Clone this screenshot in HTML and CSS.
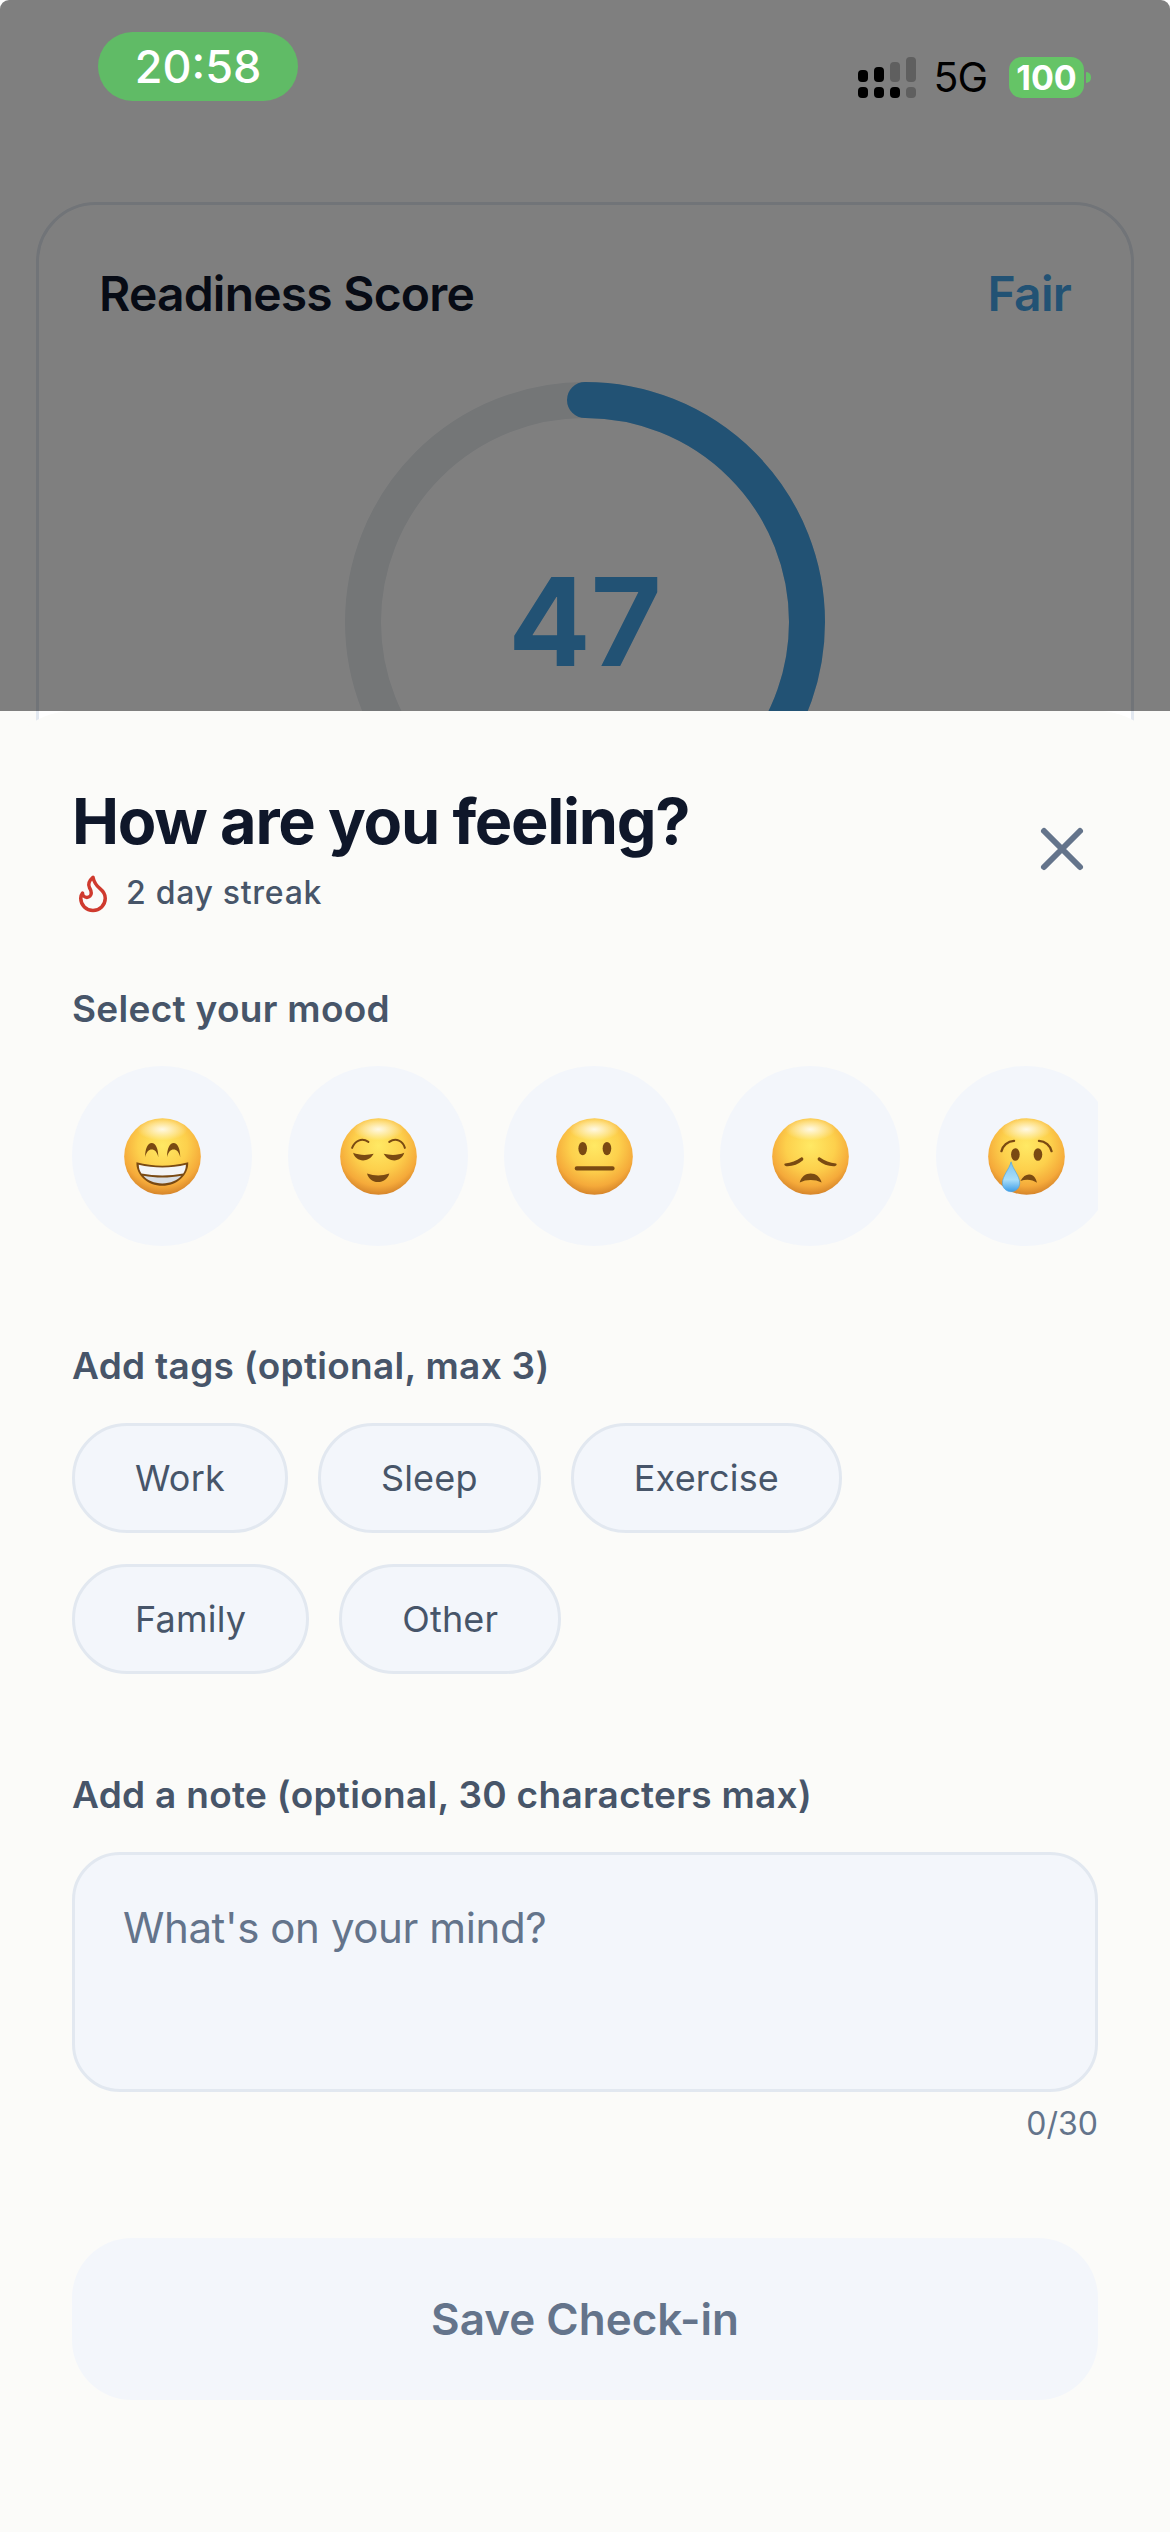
FILE: index.html
```html
<!DOCTYPE html>
<html lang="en">
<head>
<meta charset="utf-8">
<title>How are you feeling?</title>
<link rel="stylesheet" href="styles.css">
</head>
<body>
<svg class="defs" width="0" height="0" aria-hidden="true">
  <defs>
    <radialGradient id="face" cx="50%" cy="36%" r="64%">
      <stop offset="0" stop-color="#ffe964"/>
      <stop offset="0.5" stop-color="#fdd04c"/>
      <stop offset="0.82" stop-color="#f5aa3a"/>
      <stop offset="1" stop-color="#d6852a"/>
    </radialGradient>
    <radialGradient id="shine" cx="50%" cy="50%" r="50%">
      <stop offset="0" stop-color="#fff" stop-opacity="0.85"/>
      <stop offset="1" stop-color="#fff" stop-opacity="0"/>
    </radialGradient>
    <linearGradient id="drop" x1="0" y1="0" x2="0" y2="1">
      <stop offset="0" stop-color="#7cc3f2"/>
      <stop offset="0.6" stop-color="#a9def9"/>
      <stop offset="1" stop-color="#3c9ce6"/>
    </linearGradient>
  </defs>
</svg>

<div class="screen">
  <main class="backdrop">
    <section class="card">
      <div class="card-head">
        <h2 class="card-title">Readiness Score</h2>
        <span class="card-state">Fair</span>
      </div>
      <div class="ring">
        <svg class="ring-svg" width="480" height="480" viewBox="0 0 480 480">
          <circle cx="240" cy="240" r="222" fill="none" stroke="#e8ecef" stroke-width="36"/>
          <circle cx="240" cy="240" r="222" fill="none" stroke="#44a4e8" stroke-width="36" stroke-linecap="round" stroke-dasharray="655.6 1394.9" transform="rotate(-90 240 240)"/>
        </svg>
        <span class="ring-value">47</span>
      </div>
    </section>
  </main>

  <div class="scrim"></div>

  <header class="status">
    <span class="status-time">20:58</span>
    <div class="status-right">
      <svg class="signal" width="58" height="41" viewBox="0 0 58 41">
        <rect x="0" y="13" width="10" height="12" rx="4" fill="#000"/>
        <rect x="16" y="10" width="10" height="15" rx="4" fill="#000"/>
        <rect x="32" y="5" width="10" height="20" rx="4" fill="#5f5f5f"/>
        <rect x="48" y="0" width="10" height="25" rx="4" fill="#5f5f5f"/>
        <rect x="0" y="30" width="10" height="11" rx="4" fill="#000"/>
        <rect x="16" y="30" width="10" height="11" rx="4" fill="#000"/>
        <rect x="32" y="30" width="10" height="11" rx="4" fill="#000"/>
        <rect x="48" y="30" width="10" height="11" rx="4" fill="#5f5f5f"/>
      </svg>
      <span class="net">5G</span>
      <div class="battery"><span class="battery-level">100</span><span class="battery-nub"></span></div>
    </div>
  </header>

  <section class="sheet">
    <div class="sheet-head">
      <div>
        <h1 class="sheet-title">How are you feeling?</h1>
        <div class="streak">
          <svg width="42" height="42" viewBox="0 0 24 24" fill="none" stroke="#cf3a2e" stroke-width="2" stroke-linecap="round" stroke-linejoin="round"><path d="M8.5 14.5A2.5 2.5 0 0 0 11 12c0-1.38-.5-2-1-3-1.072-2.143-.224-4.054 2-6 .5 2.5 2 4.9 4 6.5 2 1.6 3 3.5 3 5.5a7 7 0 1 1-14 0c0-1.153.433-2.294 1-3a2.5 2.5 0 0 0 2.5 2.5z"/></svg>
          <span>2 day streak</span>
        </div>
      </div>
      <svg class="close" width="72" height="72" viewBox="0 0 24 24" fill="none" stroke="#64748b" stroke-width="2" stroke-linecap="round" stroke-linejoin="round"><path d="M18 6 6 18M6 6l12 12"/></svg>
    </div>

    <h3 class="label label-mood">Select your mood</h3>
    <div class="moods">
      <div class="mood">
        <svg class="emoji" viewBox="0 0 231 232">
          <circle cx="115.5" cy="116" r="115.5" fill="url(#face)"/>
          <ellipse cx="115" cy="34" rx="76" ry="34" fill="url(#shine)"/>
          <path d="M63 118c0-26 8-43 20-43s20 17 20 43c-4-16-11-23-20-23s-16 7-20 23z" fill="#7a4a12"/>
          <path d="M129 118c0-26 8-43 20-43s20 17 20 43c-4-16-11-23-20-23s-16 7-20 23z" fill="#7a4a12"/>
          <path d="M37 133c52 14 104 14 156 0 2 38-34 71-78 71s-80-33-78-71z" fill="#7a4a12"/>
          <path d="M44 141c46 11 96 11 142 0 0 10-3 19-8 26-40 8-86 8-126 0-5-7-8-16-8-26z" fill="#f3f4f6"/>
          <path d="M58 174c36 7 78 7 114 0-12 14-32 23-57 23s-45-9-57-23z" fill="#d8dde2"/>
        </svg>
      </div>
      <div class="mood">
        <svg class="emoji" viewBox="0 0 231 232">
          <circle cx="115.5" cy="116" r="115.5" fill="url(#face)"/>
          <ellipse cx="115" cy="34" rx="76" ry="34" fill="url(#shine)"/>
          <path d="M36 90c8-20 28-32 49-18" fill="none" stroke="#7a4a12" stroke-width="6" stroke-linecap="round"/>
          <path d="M148 72c21-14 41-2 47 18" fill="none" stroke="#7a4a12" stroke-width="6" stroke-linecap="round"/>
          <path d="M39 105c18 8 42 8 62 3-8 14-20 20-32 20-14 0-26-9-30-23z" fill="#7a4a12"/>
          <path d="M193 105c-18 8-42 8-62 3 8 14 20 20 32 20 14 0 26-9 30-23z" fill="#7a4a12"/>
          <path d="M81 167c22 8 45 8 67 0-4 16-18 26-34 26s-29-10-33-26z" fill="#7a4a12"/>
        </svg>
      </div>
      <div class="mood">
        <svg class="emoji" viewBox="0 0 231 232">
          <circle cx="115.5" cy="116" r="115.5" fill="url(#face)"/>
          <ellipse cx="115" cy="34" rx="76" ry="34" fill="url(#shine)"/>
          <ellipse cx="80" cy="92" rx="13" ry="20" fill="#7a4a12"/>
          <ellipse cx="153" cy="92" rx="13" ry="20" fill="#7a4a12"/>
          <rect x="56" y="145" width="120" height="13" rx="6" fill="#7a4a12"/>
        </svg>
      </div>
      <div class="mood">
        <svg class="emoji" viewBox="0 0 231 232">
          <circle cx="115.5" cy="116" r="115.5" fill="url(#face)"/>
          <ellipse cx="115" cy="34" rx="76" ry="34" fill="url(#shine)"/>
          <path d="M39 137c18-2 34-8 48-18 5-2 9 4 6 8-14 12-32 19-50 18-5 0-9-6-4-8z" fill="#7a4a12"/>
          <path d="M192 137c-18-2-34-8-48-18-5-2-9 4-6 8 14 12 32 19 50 18 5 0 9-6 4-8z" fill="#7a4a12"/>
          <path d="M83 194c4-17 18-27 33-27s29 10 33 27c-20-10-46-10-66 0z" fill="#7a4a12"/>
        </svg>
      </div>
      <div class="mood">
        <svg class="emoji" viewBox="0 0 231 232">
          <circle cx="115.5" cy="116" r="115.5" fill="url(#face)"/>
          <ellipse cx="115" cy="34" rx="76" ry="34" fill="url(#shine)"/>
          <path d="M40 100c4-16 18-30 38-31" fill="none" stroke="#7a4a12" stroke-width="7" stroke-linecap="round"/>
          <path d="M153 69c20 1 34 15 38 31" fill="none" stroke="#7a4a12" stroke-width="7" stroke-linecap="round"/>
          <ellipse cx="82" cy="110" rx="13" ry="19" fill="#7a4a12"/>
          <ellipse cx="150" cy="110" rx="13" ry="19" fill="#7a4a12"/>
          <path d="M97 190c8-15 18-21 28-20 12 1 19 11 22 25-14-10-32-12-50-5z" fill="#7a4a12"/>
          <path d="M69 132c6 24 26 42 26 64 0 15-12 26-26 26s-26-11-26-26c0-22 20-40 26-64z" fill="url(#drop)" stroke="#4ba6e6" stroke-width="2"/>
        </svg>
      </div>
    </div>

    <h3 class="label label-tags">Add tags (optional, max 3)</h3>
    <div class="tags">
      <button class="tag">Work</button>
      <button class="tag">Sleep</button>
      <button class="tag">Exercise</button>
      <button class="tag">Family</button>
      <button class="tag">Other</button>
    </div>

    <h3 class="label label-note">Add a note (optional, 30 characters max)</h3>
    <textarea class="note" placeholder="What's on your mind?"></textarea>
    <div class="counter">0/30</div>

    <button class="save">Save Check-in</button>
  </section>
</div>
</body>
</html>
```
FILE: styles.css
```css
* { box-sizing: border-box; }

html, body {
  margin: 0;
  padding: 0;
  background: #fff;
}

body {
  font-family: Inter, "Liberation Sans", sans-serif;
}

.defs { position: absolute; }

.screen {
  position: relative;
  width: 1170px;
  height: 2532px;
  overflow: hidden;
  background: #fbfbf9;
}

.backdrop {
  height: 711px;
  padding: 202px 36px 0;
  background: #fff;
}

.card {
  height: 900px;
  padding: 58px 60px 0;
  background: #fff;
  border: 3px solid #e2e8f0;
  border-radius: 60px;
}

.card-head {
  display: flex;
  justify-content: space-between;
  align-items: center;
  height: 60px;
}

.card-title {
  margin: 0;
  font-size: 48px;
  font-weight: 600;
  letter-spacing: -0.8px;
  color: #0f172a;
}

.card-state {
  font-size: 48px;
  font-weight: 600;
  letter-spacing: -0.75px;
  color: #44a4e8;
}

.ring {
  position: relative;
  width: 480px;
  height: 480px;
  margin: 59px auto 0;
  display: flex;
  align-items: center;
  justify-content: center;
}

.ring-svg { position: absolute; inset: 0; }

.ring-value {
  font-size: 122px;
  font-weight: 700;
  line-height: 1;
  color: #44a4e8;
}

.scrim {
  position: absolute;
  left: 0;
  top: 0;
  right: 0;
  height: 711px;
  border-radius: 9px 9px 0 0;
  background: rgba(0, 0, 0, 0.5);
}

.status {
  position: absolute;
  left: 0;
  top: 0;
  right: 0;
  padding: 32px 79px 0 98px;
  display: flex;
  justify-content: space-between;
  align-items: flex-start;
}

.status-time {
  width: 200px;
  height: 69px;
  border-radius: 35px;
  background: #60bb66;
  color: #fff;
  font-size: 45px;
  font-weight: 500;
  line-height: 69px;
  text-align: center;
}

.status-right {
  display: flex;
  align-items: center;
  margin-top: 25px;
}

.signal { display: block; }

.net {
  margin-left: 17px;
  font-size: 41px;
  letter-spacing: -1px;
  line-height: 41px;
  color: #000;
}

.battery {
  display: flex;
  align-items: center;
  margin-left: 22px;
}

.battery-level {
  width: 75px;
  height: 41px;
  border-radius: 13px;
  background: #65c466;
  color: #fff;
  font-size: 34px;
  font-weight: 700;
  line-height: 41px;
  text-align: center;
}

.battery-nub {
  width: 5px;
  height: 11px;
  margin-left: 2px;
  border-radius: 0 6px 6px 0;
  background: #65c466;
}

.sheet {
  position: absolute;
  left: 0;
  right: 0;
  top: 711px;
  bottom: 0;
  padding: 72px 72px 0;
  background: #fbfbf9;
  border-radius: 72px 72px 0 0;
}

.sheet-head {
  display: flex;
  justify-content: space-between;
  align-items: center;
}

.sheet-title {
  margin: 0;
  font-size: 63px;
  font-weight: 700;
  letter-spacing: -1.3px;
  line-height: 76px;
  color: #0f172a;
}

.streak {
  display: flex;
  align-items: center;
  gap: 12px;
  margin-top: 13px;
  font-size: 32px;
  font-weight: 500;
  letter-spacing: 0.7px;
  line-height: 42px;
  color: #475569;
}

.close { display: block; }

.label {
  margin: 0 0 30px;
  font-size: 37px;
  font-weight: 600;
  letter-spacing: 0.3px;
  line-height: 54px;
  color: #475569;
}

.label-mood { margin-top: 68px; }
.label-tags { margin-top: 93px; }
.label-note { margin-top: 94px; }

.moods {
  display: flex;
  gap: 36px;
  overflow: hidden;
}

.mood {
  flex: none;
  width: 180px;
  height: 180px;
  border-radius: 50%;
  background: #f3f6fb;
  display: flex;
  align-items: center;
  justify-content: center;
}

.emoji {
  display: block;
  width: 77px;
  height: 77px;
}

.tags {
  display: flex;
  flex-wrap: wrap;
  gap: 31px 30px;
  width: 800px;
}

.tag {
  height: 110px;
  padding: 0 60px;
  border: 3px solid #e2e8f0;
  border-radius: 55px;
  background: #f3f6fb;
  font-family: inherit;
  font-size: 36px;
  font-weight: 400;
  letter-spacing: 0.2px;
  color: #475569;
}

.note {
  display: block;
  width: 100%;
  height: 240px;
  padding: 46px 48px;
  border: 3px solid #e2e8f0;
  border-radius: 48px;
  background: #f3f6fb;
  font-family: inherit;
  font-size: 42px;
  letter-spacing: -0.4px;
  line-height: 54px;
  resize: none;
  outline: none;
}

.note::placeholder {
  color: #64748b;
  opacity: 1;
}

.counter {
  margin-top: 12px;
  font-size: 32px;
  line-height: 40px;
  text-align: right;
  color: #64748b;
}

.save {
  display: block;
  width: 100%;
  height: 162px;
  margin-top: 94px;
  border: 0;
  border-radius: 60px;
  background: #f3f6fb;
  font-family: inherit;
  font-size: 44px;
  font-weight: 600;
  color: #64748b;
}
```
